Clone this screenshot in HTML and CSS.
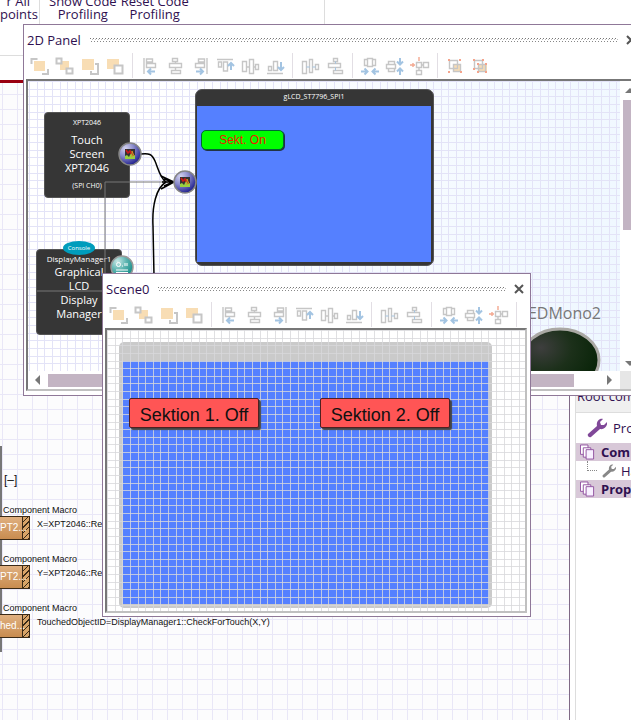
FILE: index.html
```html
<!DOCTYPE html>
<html lang="en">
<head>
<meta charset="utf-8">
<title>2D Panel</title>
<link rel="stylesheet" href="styles.css">
</head>
<body>
<svg class="sprite" aria-hidden="true">
  <defs>
    <radialGradient id="ball-blue" cx="30%" cy="25%" r="80%"><stop offset="0" stop-color="#d4d4f0"/><stop offset=".45" stop-color="#8c8ccc"/><stop offset="1" stop-color="#1c1c8c"/></radialGradient>
    <radialGradient id="ball-teal" cx="30%" cy="25%" r="80%"><stop offset="0" stop-color="#c8e8e6"/><stop offset=".5" stop-color="#5cb4b0"/><stop offset="1" stop-color="#148c88"/></radialGradient>
    <radialGradient id="led" cx="25%" cy="30%" r="80%"><stop offset="0" stop-color="#3e3e3e"/><stop offset=".5" stop-color="#1c301a"/><stop offset="1" stop-color="#082408"/></radialGradient>
  </defs>
  <symbol id="i-front" viewBox="0 0 20 20"><path class="g thick" d="M1.500 7V2h6M18 12v5h-6"/><path class="o" d="M4 4h11v10H4z"/></symbol>
  <symbol id="i-forward" viewBox="0 0 20 20"><path class="o" d="M5 4h9v9H5z"/><path class="gw thick" d="M1.500 1.500h5v5h-5zM11.500 11.500h6v5h-6z"/></symbol>
  <symbol id="i-backward" viewBox="0 0 20 20"><path class="g thick" d="M15 7h3v10h-7v-3"/><path class="o" d="M2 2h12v11H2z"/></symbol>
  <symbol id="i-back" viewBox="0 0 20 20"><path class="o" d="M2 2h12v10H2z"/><path class="gw thick" d="M9.500 8.500h8v8h-8z"/></symbol>
  <symbol id="i-left" viewBox="0 0 20 20"><path class="g" d="M4 1v16M6.500 2h6v3h-6zM6.500 6.500h9v4h-9z"/><path class="b" d="M15 14.500H8M11 11.500l-3 3 3 3"/></symbol>
  <symbol id="i-center" viewBox="0 0 20 20"><path class="g" d="M7.500 1.500h5v3h-5zM4.500 6.500h12v4h-12zM6.500 13.500h9v3h-9zM10.500 4.500v2M10.500 10.500v3"/></symbol>
  <symbol id="i-right" viewBox="0 0 20 20"><path class="g" d="M17 1v16M8.500 2h6v3h-6zM5.500 6.500h9v4h-9z"/><path class="b" d="M6 14.500h7M10 11.500l3 3-3 3"/></symbol>
  <symbol id="i-top" viewBox="0 0 20 20"><path class="g" d="M2 2.500h16M3.500 5v5h3V5zM8.500 5v9h4V5z"/><path class="b" d="M16 13V6M13 9l3-3 3 3"/></symbol>
  <symbol id="i-middle" viewBox="0 0 20 20"><path class="g" d="M2.500 4.500h4v10h-4zM9.500 2.500h4v14h-4zM15.500 7.500h3v5h-3zM6.500 10h3M13.500 10h2"/></symbol>
  <symbol id="i-bottom" viewBox="0 0 20 20"><path class="g" d="M2 16.500h16M3.500 9.500v4h3v-4zM8.500 4.500v9h4v-9z"/><path class="b" d="M16 5v8M13 10l3 3 3-3"/></symbol>
  <symbol id="i-spread-h" viewBox="0 0 20 20"><path class="g" d="M2.500 4.500h4v12h-4zM9.500 2.500h3v13h-3zM15.500 7.500h3v5h-3z"/><path class="b thin" d="M6.500 10h3M12.500 10h3"/></symbol>
  <symbol id="i-spread-v" viewBox="0 0 20 20"><path class="g" d="M8.500 1.500h4v3h-4zM3.500 6.500h12v4h-12zM8.500 13.500h9v3h-9z"/><path class="b thin" d="M10.500 4.500v2M10.500 10.500v3"/></symbol>
  <symbol id="i-width" viewBox="0 0 20 20"><path class="g" d="M4.500 2.500h3v6h-3zM7.500 1.500h5v8h-5zM12.500 2.500h3v6h-3z"/><path class="b" d="M1 14.500h6M4.500 11.500l3 3-3 3M19 14.500h-6M15.500 11.500l-3 3 3 3"/></symbol>
  <symbol id="i-height" viewBox="0 0 20 20"><path class="g" d="M3.500 4.500h6v3h-6zM1.500 7.500h9v4h-9zM3.500 11.500h6v3h-6z"/><path class="b" d="M15 1v6M12 4.500l3 3 3-3M15 18v-6M12 14.500l3-3 3 3"/></symbol>
  <symbol id="i-snap" viewBox="0 0 20 20"><path class="g" d="M6.500 5.500h5v5h-5zM13.500 5.500h5v5h-5zM6.500 13.500h5v4h-5zM11 8h3M9 10v4"/><path class="r" d="M9 0v4M0 8h5M3 6v4"/></symbol>
  <symbol id="i-group" viewBox="0 0 20 20"><path class="o" d="M8 8h7v7H8z"/><path class="g" d="M4.500 3.500h8v8h-8zM8.500 7.500h7v7h-7z"/><path class="dot" d="M3 2h2v2H3zM14 2h2v2h-2zM3 14h2v2H3zM15 14h2v2h-2z"/></symbol>
  <symbol id="i-ungroup" viewBox="0 0 20 20"><path class="o" d="M8 7h9v8H8z"/><path class="g" d="M4.500 3.500h8v8h-8zM8.500 7.500h7v7h-7z"/><path class="dot" d="M3 2h2v2H3zM12 2h2v2h-2zM3 11h2v2H3zM7 14h2v2H7zM15 14h2v2h-2zM15 6h2v2h-2zM7 6h2v2H7z"/></symbol>
  <symbol id="i-port" viewBox="0 0 24 24"><circle cx="12" cy="12" r="11" fill="url(#ball-blue)" stroke="#858585" stroke-width="1.500"/><path fill="#333" d="M7 7h10v10H7z"/><path fill="#98d040" d="M7 17v-3l2-1 2 2 2-4 2 3 2-1v4z"/><path d="M8 8l2 3 2-2 1 3" fill="none" stroke="#d01818" stroke-width="1.500"/><path d="M14 15V9l2 5" fill="none" stroke="#e88820"/></symbol>
  <symbol id="i-pages" viewBox="0 0 16 16"><path fill="#fff" stroke="#9050a0" d="M.5.5h8v10h-8z"/><path fill="#fff" stroke="#9050a0" d="M3.500 3.500h8v10h-8z"/><path fill="#f8f0ff" stroke="#9050a0" d="M6.500 5.500h8v10h-8z"/></symbol>
  <symbol id="i-wrench" viewBox="0 0 20 20"><path fill="currentColor" d="M1 16 10 8C9 4 12 0 16 1l-3 3 1 3 3 0 3-3c1 4-3 8-7 7L4 19c-2 1-4-1-3-3z"/></symbol>
</svg>

<div class="desktop">
  <header class="ribbon">
    <div class="ribbon-item ribbon-first">r All<br>points</div>
    <div class="ribbon-group">
      <div class="ribbon-item">Show Code<br>Profiling</div>
      <div class="ribbon-item">Reset Code<br>Profiling</div>
    </div>
  </header>
  <div class="tab-strip"></div>
  <div class="workspace">
    <main class="flowchart">
      <div class="branch">
        <div class="collapse">[–]</div>
        <div class="macro"><div class="macro-title">Component Macro</div><div class="macro-row"><div class="macro-box">PT2...</div><span>X=XPT2046::Re</span></div></div>
        <div class="macro"><div class="macro-title">Component Macro</div><div class="macro-row"><div class="macro-box">PT2...</div><span>Y=XPT2046::Re</span></div></div>
        <div class="macro"><div class="macro-title">Component Macro</div><div class="macro-row"><div class="macro-box">hed...</div><span>TouchedObjectID=DisplayManager1::CheckForTouch(X,Y)</span></div></div>
      </div>
    </main>
    <aside class="properties">
      <div class="prop-root">Root com</div>
      <div class="prop-tab"><svg class="wrench" aria-hidden="true"><use href="#i-wrench"/></svg>Pro</div>
      <div class="prop-head"><svg class="pages" aria-hidden="true"><use href="#i-pages"/></svg>Com</div>
      <div class="prop-item"><i class="branch-line"></i><svg class="wrench-small" aria-hidden="true"><use href="#i-wrench"/></svg>Ha</div>
      <div class="prop-head"><svg class="pages" aria-hidden="true"><use href="#i-pages"/></svg>Prop</div>
    </aside>
  </div>

  <section class="window panel-window">
    <div class="titlebar"><h2>2D Panel</h2><i class="grip"></i><button class="close" aria-label="Close 2D Panel"><svg viewBox="0 0 10 10"><path d="M1 1l8 8M9 1L1 9"/></svg></button></div>
    <div class="toolbar">
      <div class="tools"><button aria-label="Bring to front"><svg><use href="#i-front"/></svg></button><button aria-label="Bring forward"><svg><use href="#i-forward"/></svg></button><button aria-label="Send backward"><svg><use href="#i-backward"/></svg></button><button aria-label="Send to back"><svg><use href="#i-back"/></svg></button></div>
      <div class="tools"><button aria-label="Align left"><svg><use href="#i-left"/></svg></button><button aria-label="Align centre"><svg><use href="#i-center"/></svg></button><button aria-label="Align right"><svg><use href="#i-right"/></svg></button><button aria-label="Align top"><svg><use href="#i-top"/></svg></button><button aria-label="Align middle"><svg><use href="#i-middle"/></svg></button><button aria-label="Align bottom"><svg><use href="#i-bottom"/></svg></button></div>
      <div class="tools"><button aria-label="Space across"><svg><use href="#i-spread-h"/></svg></button><button aria-label="Space down"><svg><use href="#i-spread-v"/></svg></button></div>
      <div class="tools"><button aria-label="Same width"><svg><use href="#i-width"/></svg></button><button aria-label="Same height"><svg><use href="#i-height"/></svg></button><button aria-label="Snap"><svg><use href="#i-snap"/></svg></button></div>
      <div class="tools"><button aria-label="Group"><svg><use href="#i-group"/></svg></button><button aria-label="Ungroup"><svg><use href="#i-ungroup"/></svg></button></div>
    </div>
    <div class="frame scroll-frame">
      <div class="canvas grid">
        <div class="node touch"><small>XPT2046</small><p>Touch<br>Screen<br>XPT2046</p><small>(SPI CH0)</small></div>
        <div class="node manager"><span class="console">Console</span><b>DisplayManager1</b><p>Graphical<br>LCD<br>Display<br>Manager</p></div>
        <div class="lcd"><div class="lcd-title">gLCD_ST7796_SPI1</div><div class="lcd-screen"><button class="sekt">Sekt. On</button></div></div>
        <div class="led-label">LEDMono2</div>
        <svg class="led" viewBox="0 0 84 68" aria-hidden="true"><ellipse cx="42" cy="34" rx="39" ry="31" fill="url(#led)" stroke="#aaa8a4" stroke-width="3"/></svg>
        <svg class="wires" viewBox="0 0 180 260" aria-hidden="true">
          <path d="M77 101H140M77 101V210H9" fill="none" stroke="#777"/>
          <path d="M113 73C121 72 124 73 127 80S132 97 138 101M126 195L125 145C124 125 128 107 138 101" fill="none" stroke="#000" stroke-width="1.500"/>
          <path d="M134 101H144M133 95l13 6-13 7M136 98l9 3-9 4" fill="none" stroke="#000" stroke-width="1.500"/>
        </svg>
        <svg class="port port-touch" aria-hidden="true"><use href="#i-port"/></svg>
        <svg class="port port-lcd" aria-hidden="true"><use href="#i-port"/></svg>
        <svg class="port port-manager" viewBox="0 0 24 24" aria-hidden="true"><circle cx="12" cy="12" r="11" fill="url(#ball-teal)" stroke="#999" stroke-width="1.500"/><path d="M6 15h12M6 17.500h12M12 11h1M15 8v3M17 8v3" stroke="#fff" fill="none"/><circle cx="8.500" cy="9.500" r="2" stroke="#fff" fill="none"/></svg>
      </div>
      <div class="vscroll"><i class="arrow up"></i><i class="thumb"></i><i class="arrow down"></i></div>
      <div class="hscroll"><i class="arrow back"></i><i class="thumb"></i><i class="arrow next"></i></div>
      <div class="corner"></div>
    </div>
  </section>

  <section class="window scene-window">
    <div class="titlebar"><h2>Scene0</h2><i class="grip"></i><button class="close" aria-label="Close Scene0"><svg viewBox="0 0 10 10"><path d="M1 1l8 8M9 1L1 9"/></svg></button></div>
    <div class="toolbar">
      <div class="tools"><button aria-label="Bring to front"><svg><use href="#i-front"/></svg></button><button aria-label="Bring forward"><svg><use href="#i-forward"/></svg></button><button aria-label="Send backward"><svg><use href="#i-backward"/></svg></button><button aria-label="Send to back"><svg><use href="#i-back"/></svg></button></div>
      <div class="tools"><button aria-label="Align left"><svg><use href="#i-left"/></svg></button><button aria-label="Align centre"><svg><use href="#i-center"/></svg></button><button aria-label="Align right"><svg><use href="#i-right"/></svg></button><button aria-label="Align top"><svg><use href="#i-top"/></svg></button><button aria-label="Align middle"><svg><use href="#i-middle"/></svg></button><button aria-label="Align bottom"><svg><use href="#i-bottom"/></svg></button></div>
      <div class="tools"><button aria-label="Space across"><svg><use href="#i-spread-h"/></svg></button><button aria-label="Space down"><svg><use href="#i-spread-v"/></svg></button></div>
      <div class="tools"><button aria-label="Same width"><svg><use href="#i-width"/></svg></button><button aria-label="Same height"><svg><use href="#i-height"/></svg></button><button aria-label="Snap"><svg><use href="#i-snap"/></svg></button></div>
      <div class="tools"><button aria-label="Group"><svg><use href="#i-group"/></svg></button></div>
    </div>
    <div class="frame scene-frame">
      <div class="scene"><div class="scene-screen"></div></div>
      <div class="scene-grid grid"></div>
      <button class="sektion first">Sektion 1. Off</button>
      <button class="sektion second">Sektion 2. Off</button>
    </div>
  </section>
</div>
</body>
</html>
```
FILE: styles.css
```css
* { box-sizing: border-box; }
body { margin: 0; font: 13px/14px "Open Sans", "Noto Sans", sans-serif; color: #2f1050; background: #fff; }
button { border: 0; padding: 0; background: none; font: inherit; color: inherit; }
h2, p { margin: 0; font: inherit; }
.sprite { position: absolute; width: 0; height: 0; }

.desktop { position: relative; display: flex; flex-direction: column; min-height: 100vh; overflow: hidden; }

/* Ribbon */
.ribbon { display: flex; height: 56px; border-bottom: 1px solid #ddd; overflow: hidden; line-height: 13px; }
.ribbon-item { text-align: center; white-space: nowrap; margin-top: -5px; }
.ribbon-first { width: 40px; text-align: right; padding-right: 9px; border-right: 1px solid #ddd; height: 40px; }
.ribbon-group { display: flex; gap: 4px; padding-left: 9px; width: 285px; border-right: 1px solid #ddd; }
.tab-strip { height: 27px; border-bottom: 3px solid #990010; }

/* Workspace */
.workspace { flex: 1; display: flex; }
.flowchart {
  flex: 1; min-width: 0; padding-top: 363px; border-right: 1px solid #806a86;
  background:
    linear-gradient(90deg, #e9e7f7 1px, transparent 1px) 2px 0 / 15px 15px,
    linear-gradient(#e9e7f7 1px, transparent 1px) 0 11px / 15px 15px,
    #fcfcfd;
  font: 9px/12px "Liberation Sans", Arial, sans-serif; color: #111;
}
.branch { border-left: 2px solid #777; height: 206px; }
.collapse { padding: 28px 0 0 2px; height: 58px; font-size: 12px; }
.macro { height: 49px; }
.macro-title { padding-left: 1px; }
.macro-row { display: flex; gap: 7px; white-space: nowrap; margin-left: -2px; }
.macro-row span { padding-top: 2px; }
.macro-box {
  width: 30px; height: 24px; border: 1px solid #3a2a18; border-left: 0; color: #fff; font-size: 10px; line-height: 22px;
  background:
    linear-gradient(#3a2a18, #3a2a18) 22px 0 / 1px 100% no-repeat,
    repeating-linear-gradient(135deg, #d8a468 0 3px, #3a2a18 3px 4px) 23px 0 / 7px 100% no-repeat,
    linear-gradient(#e0b080, #c88c50);
}

/* Properties */
.properties { width: 61px; padding: 306px 0 0 6px; overflow: hidden; white-space: nowrap; background: linear-gradient(#ddd, #ddd) 5px 0 / 1px 100% no-repeat #fff; }
.prop-root { height: 24px; background: #f0f0f0; border-bottom: 1px solid #ddd; padding: 0 1px; }
.prop-tab { display: flex; align-items: center; height: 30px; padding-left: 11px; gap: 6px; }
.prop-head { display: flex; align-items: center; gap: 6px; height: 18px; padding-left: 4px; background: #d8c8d8; font-weight: bold; }
.prop-item { display: flex; align-items: center; gap: 5px; height: 19px; padding-left: 11px; }
.wrench { flex: none; width: 20px; height: 20px; color: #804898; }
.wrench-small { flex: none; width: 14px; height: 14px; color: #888; }
.pages { flex: none; width: 15px; height: 16px; }
.branch-line { flex: none; width: 10px; height: 10px; margin-bottom: 9px; border: dotted #888; border-width: 0 0 1px 1px; }

/* Windows */
.window { position: absolute; display: flex; flex-direction: column; background: #fff; border: 1px solid #8f7898; overflow: hidden; }
.panel-window { left: 23px; right: -12px; top: 24px; height: 372px; }
.scene-window { left: 102px; width: 429px; top: 273px; height: 344px; }
.titlebar { flex: none; display: flex; align-items: center; height: 28px; padding: 2px 6px 0 3px; }
.grip {
  flex: 1; height: 4px; margin: 0 8px 0 9px;
  background:
    linear-gradient(90deg, #777 1px, transparent 1px) 0 0 / 3px 1px repeat-x,
    linear-gradient(90deg, #bbb 1px, transparent 1px) 2px 1px / 3px 1px repeat-x,
    linear-gradient(90deg, #888 1px, transparent 1px) 1px 3px / 3px 1px repeat-x;
}
.close, .close svg { display: block; width: 10px; height: 10px; }
.close path { stroke: #555; stroke-width: 2; }
.toolbar { flex: none; display: flex; height: 25px; padding-left: 3px; margin-right: 3px; overflow: hidden; }
.tools { flex: none; display: flex; }
.tools + .tools { margin-left: 5px; padding-left: 4px; border-left: 1px solid #e2dee4; }
.tools button { width: 25px; height: 24px; }
.tools svg { display: block; width: 20px; height: 20px; margin: 3px 3px 0; }
.g, .gw { fill: none; stroke: #c6c6c6; stroke-width: 1.4; }
.gw { fill: #fff; }
.thick { stroke-width: 2; }
.o { fill: #f8ddb4; }
.b { fill: none; stroke: #a3c4e2; stroke-width: 2; }
.b.thin { stroke-width: 1; }
.r { fill: none; stroke: #f4a890; stroke-width: 1.4; }
.dot { fill: #f4a48c; }
.frame { position: relative; flex: 1; min-height: 0; border: 2px solid #c0c0c0; border-top-color: #777; border-left-color: #777; overflow: hidden; }

.grid {
  --line: #e3e3f7;
  --stops: var(--line) 1px, transparent 1px 8px, var(--line) 8px 9px, transparent 9px 15px, var(--line) 15px 16px, transparent 16px 23px, var(--line) 23px 24px, transparent 24px 31px, var(--line) 31px 32px, transparent 32px 38px, var(--line) 38px 39px, transparent 39px 46px, var(--line) 46px 47px, transparent 47px 53px, var(--line) 53px 54px, transparent 54px;
}

/* 2D panel */
.scroll-frame { display: grid; grid-template: minmax(0, 1fr) 18px / minmax(0, 1fr) 17px; margin: 1px 3px 4px 2px; }
.canvas {
  position: relative; overflow: hidden;
  background:
    linear-gradient(90deg, var(--stops)) 1px 0 / 61px 61px,
    linear-gradient(var(--stops)) 0 0 / 61px 61px,
    linear-gradient(110deg, #fff 20%, #eef7ff);
}
.node { position: absolute; width: 86px; height: 86px; border-radius: 4px; background: #363636; color: #fff; text-align: center; font-size: 11px; border: 1px solid #555; }
.node small { display: block; font-size: 7px; line-height: 12px; }
.touch { left: 16px; top: 31px; padding-top: 4px; }
.touch p { margin: 4px 0 5px; }
.manager { left: 8px; top: 168px; padding-top: 3px; }
.manager b { display: block; font: 8px/12px "Open Sans", sans-serif; }
.console { position: absolute; left: 26px; top: -9px; width: 32px; height: 14px; border-radius: 50%; background: #009cbc; font-size: 6px; line-height: 14px; }
.lcd { position: absolute; left: 167px; top: 8px; width: 239px; height: 177px; border-radius: 7px; background: #363636; padding: 0 2px 3px 1px; border: 1px solid #555; display: flex; flex-direction: column; }
.lcd-title { height: 16px; line-height: 13px; font-size: 7px; text-align: center; color: #fff; }
.lcd-screen { flex: 1; background: #5580ff; padding: 24px 4px; }
.sekt { display: block; width: 83px; height: 20px; border: 1px solid #063; border-radius: 5px; background: #0f0; color: #f01800; font: 12px/16px "Liberation Sans", Arial, sans-serif; box-shadow: 1px 1px #234; }
.led-label { position: absolute; right: 19px; bottom: 48px; font-size: 16px; line-height: 20px; color: #777; }
.led { position: absolute; left: 490px; top: 245px; width: 84px; height: 68px; }
.wires { position: absolute; left: 0; top: 0; width: 180px; height: 260px; }
.port { position: absolute; width: 24px; height: 24px; }
.port-touch { left: 90px; top: 61px; }
.port-lcd { left: 145px; top: 89px; }
.port-manager { left: 82px; top: 174px; }
.vscroll, .hscroll { display: flex; align-items: center; background: #fff; }
.vscroll { flex-direction: column; padding: 7px 0 5px 3px; }
.hscroll { padding: 0 8px 0 7px; }
.arrow { width: 0; height: 0; border: 5px solid transparent; }
.up { border-top: 0; border-bottom-color: #777; }
.down { border-bottom: 0; border-top-color: #777; margin-top: auto; }
.back { border-left: 0; border-right-color: #777; }
.next { border-right: 0; border-left-color: #777; margin-left: auto; }
.thumb { background: #c3b4c3; }
.vscroll .thumb { width: 14px; height: 130px; margin-top: 7px; }
.hscroll .thumb { width: 526px; height: 13px; margin-left: 8px; }
.corner { background: #e6e6e6; }

/* Scene */
.scene-frame { margin: 1px 3px 3px 2px; }
.scene { position: absolute; left: 12px; top: 12px; width: 373px; height: 266px; padding: 19px 3px 4px 4px; border-radius: 5px; background: #cacaca; }
.scene-screen { height: 100%; background: #5580ff; }
.scene-grid { --line: rgba(216, 216, 219, .8); position: absolute; inset: 0; background: linear-gradient(90deg, var(--stops)) 0 0 / 61px 61px, linear-gradient(var(--stops)) 0 0 / 61px 61px; }
.sektion { position: absolute; top: 68px; width: 130px; height: 30px; border: 1px solid #502020; border-radius: 2px; background: #ff5555; color: #111; font: 18px/28px "Liberation Sans", Arial, sans-serif; box-shadow: 2px 2px 1px #444; padding-top: 2px; }
.first { left: 22px; }
.second { left: 213px; }
```
